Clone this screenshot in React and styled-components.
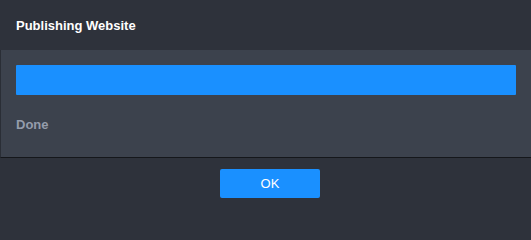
import React from 'react';
import styled, { createGlobalStyle } from 'styled-components';

const GlobalStyle = createGlobalStyle`
  html, body {
    margin: 0;
    padding: 0;
    background: #2e323b;
  }
  body {
    font-family: Arial, "Liberation Sans", Helvetica, sans-serif;
  }
`;

const Dialog = styled.div`
  width: 531px;
  height: 208px;
  display: flex;
  flex-direction: column;
  background: #2e323b;
`;

const Header = styled.div`
  height: 50px;
  display: flex;
  align-items: center;
  padding-left: 16px;
  box-sizing: border-box;
`;

const Title = styled.h1`
  margin: 0;
  font-size: 13px;
  font-weight: bold;
  color: #ffffff;
`;

const Body = styled.div`
  height: 108px;
  box-sizing: border-box;
  background: #3c424d;
  border-left: 1px solid #2a2e36;
  border-bottom: 1px solid #15171b;
  padding: 15px 15px 0 15px;
  display: flex;
  flex-direction: column;
  gap: 22px;
`;

const ProgressBar = styled.div`
  height: 30px;
  border-radius: 1px;
  overflow: hidden;
  background: #2a2e36;
`;

const ProgressFill = styled.div`
  height: 100%;
  background: #1a90ff;
`;

const Status = styled.div`
  font-size: 13px;
  font-weight: bold;
  color: #959cab;
`;

const Footer = styled.div`
  flex: 1;
  display: flex;
  align-items: center;
  justify-content: center;
  padding-left: 9px;
`;

const Button = styled.button`
  width: 100px;
  height: 29px;
  border: none;
  border-radius: 2px;
  background: #1a90ff;
  color: #ffffff;
  font-family: inherit;
  font-size: 13px;
  cursor: pointer;
  margin-top: 1px;
`;

const App = () => {
  const progress = 100;

  return (
    <>
      <GlobalStyle />
      <Dialog>
        <Header>
          <Title>Publishing Website</Title>
        </Header>
        <Body>
          <ProgressBar>
            <ProgressFill style={{ width: `${progress}%` }} />
          </ProgressBar>
          <Status>Done</Status>
        </Body>
        <Footer>
          <Button>OK</Button>
        </Footer>
      </Dialog>
    </>
  );
};

export default App;
